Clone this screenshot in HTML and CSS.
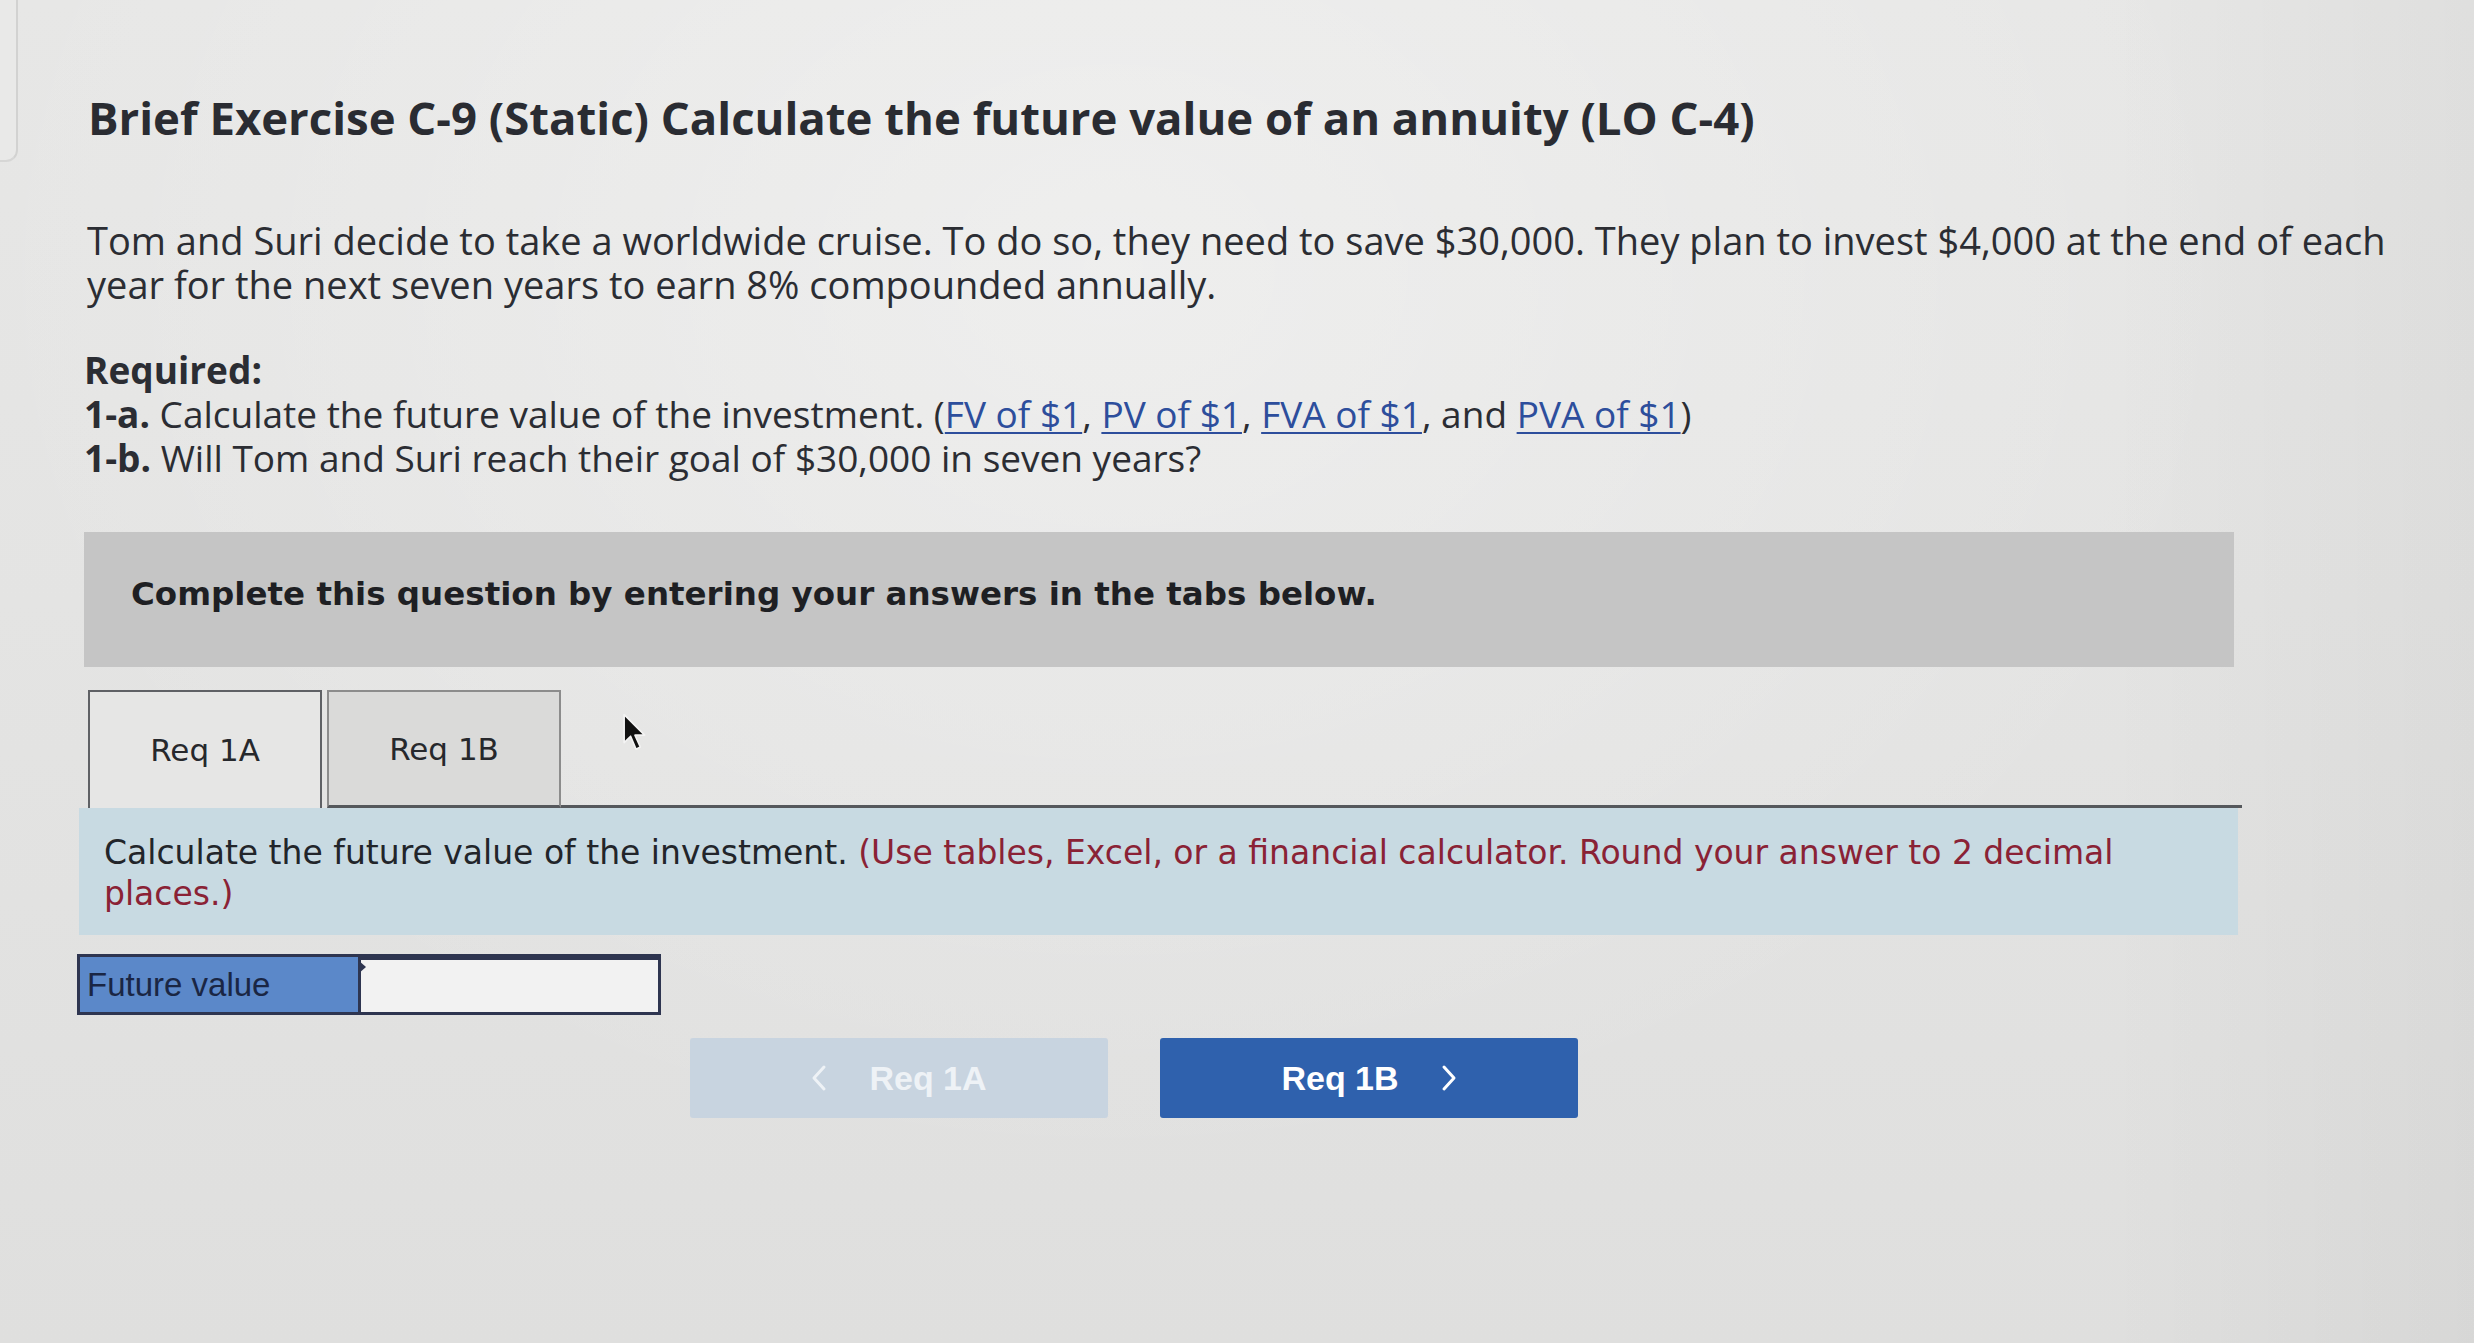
FILE: index.html
```html
<!DOCTYPE html>
<html lang="en">
<head>
<meta charset="utf-8">
<title>Brief Exercise C-9 (Static)</title>
<link rel="stylesheet" href="styles.css">
</head>
<body>
<div class="screen">
  <div class="edge"></div>
  <div class="page">
    <h1 class="title">Brief Exercise C-9 (Static) Calculate the future value of an annuity (LO C-4)</h1>
    <p class="intro">Tom and Suri decide to take a worldwide cruise. To do so, they need to save $30,000. They plan to invest $4,000 at the end of each year for the next seven years to earn 8% compounded annually.</p>
    <div class="required">
      <div class="req-head">Required:</div>
      <div class="req-line"><b>1-a.</b> Calculate the future value of the investment. (<a href="#">FV of $1</a>, <a href="#">PV of $1</a>, <a href="#">FVA of $1</a>, and <a href="#">PVA of $1</a>)</div>
      <div class="req-line"><b>1-b.</b> Will Tom and Suri reach their goal of $30,000 in seven years?</div>
    </div>
    <div class="notice">Complete this question by entering your answers in the tabs below.</div>
    <div class="tabs">
      <div class="tab tab-active">Req 1A</div>
      <div class="tab">Req 1B</div>
      <div class="tab-rest"></div>
    </div>
    <div class="panel"><span class="lead">Calculate the future value of the investment.</span> <span class="hint">(Use tables, Excel, or a financial calculator. Round your answer to 2 decimal places.)</span></div>
    <div class="answer">
      <div class="answer-label">Future value</div>
      <div class="answer-input"><span class="marker"></span></div>
    </div>
    <div class="nav">
      <button class="btn btn-prev">
        <svg class="chev" width="16" height="28" viewBox="0 0 16 28" aria-hidden="true"><polyline points="13,3 3,14 13,25" fill="none" stroke="currentColor" stroke-width="3" stroke-linecap="round" stroke-linejoin="round"/></svg>
        <span>Req 1A</span>
      </button>
      <button class="btn btn-next">
        <span>Req 1B</span>
        <svg class="chev" width="16" height="28" viewBox="0 0 16 28" aria-hidden="true"><polyline points="3,3 13,14 3,25" fill="none" stroke="currentColor" stroke-width="3" stroke-linecap="round" stroke-linejoin="round"/></svg>
      </button>
    </div>
  </div>
  <svg class="cursor" width="28" height="42" viewBox="0 0 26 38" aria-hidden="true">
    <path d="M2 2 L2 28 L8 22 L13 34 L17 32 L12 21 L21 21 Z" fill="#111" stroke="#f4f4f4" stroke-width="1.5" stroke-linejoin="round"/>
  </svg>
</div>
</body>
</html>
```
FILE: styles.css
```css
html, body {
  margin: 0;
  padding: 0;
}
body {
  width: 2474px;
  height: 1343px;
  overflow: hidden;
  background: linear-gradient(180deg, #e7e7e6 0%, #e4e4e3 45%, #dfdfde 100%);
  font-family: "Open Sans", "Liberation Sans", sans-serif;
  color: #2b2d33;
}
.screen {
  position: relative;
  width: 100%;
  height: 100%;
  background:
    linear-gradient(90deg, rgba(0,0,0,0) 85%, rgba(0,0,0,0.035) 100%),
    radial-gradient(ellipse at 45% 20%, rgba(255,255,255,0.35), rgba(255,255,255,0) 60%);
}
.edge {
  position: absolute;
  left: 0;
  top: 0;
  width: 16px;
  height: 160px;
  border-right: 2px solid #d2d2d1;
  border-bottom: 2px solid #d6d6d5;
  border-bottom-right-radius: 12px;
  background: #e9e9e8;
}
.page {
  padding: 91px 0 0 84px;
}
.title {
  margin: 0 0 0 4px;
  font-size: 45.5px;
  line-height: 52px;
  font-weight: 700;
  color: #2a2c32;
  white-space: nowrap;
}
.intro {
  margin: 75px 0 0 3px;
  font-size: 38px;
  line-height: 44px;
  width: 2345px;
}
.required {
  margin-top: 42px;
  font-size: 37px;
  line-height: 44px;
}
.req-head,
.req-line b {
  font-weight: 700;
}
.required a {
  color: #2d4e9c;
  text-decoration: underline;
  text-decoration-thickness: 2px;
  text-underline-offset: 4px;
}
.notice {
  margin-top: 52px;
  width: 2150px;
  height: 135px;
  box-sizing: border-box;
  padding: 43px 0 0 47px;
  background: #c5c5c5;
  font-family: "DejaVu Sans", Verdana, sans-serif;
  font-weight: 700;
  font-size: 32.5px;
  color: #1e1f23;
}
.tabs {
  display: flex;
  align-items: flex-end;
  margin-top: 23px;
  margin-left: 4px;
  width: 2154px;
}
.tab {
  box-sizing: border-box;
  width: 234px;
  height: 118px;
  display: flex;
  align-items: center;
  justify-content: center;
  font-family: "DejaVu Sans", Verdana, sans-serif;
  font-size: 31px;
  color: #26282c;
  border: 2px solid #8c8c8c;
  border-bottom: 3px solid #55585c;
  background: #dadad9;
  margin-right: 5px;
}
.tab-active {
  background: #e6e6e5;
  border-color: #5f6165;
  border-bottom: none;
}
.tab-rest {
  flex: 1;
  border-bottom: 3px solid #55585c;
  margin-left: -5px;
}
.panel {
  margin-left: -5px;
  width: 2159px;
  height: 127px;
  box-sizing: border-box;
  padding: 24px 40px 0 25px;
  background: #c8dae2;
  font-family: "DejaVu Sans", Verdana, sans-serif;
  font-size: 33px;
  line-height: 41px;
  color: #22252a;
}
.hint {
  color: #8a2235;
}
.answer {
  display: flex;
  margin-top: 19px;
  margin-left: -7px;
  width: 584px;
  height: 61px;
  box-sizing: border-box;
  border: 3px solid #2e3550;
}
.answer-label {
  width: 278px;
  background: #5b88c9;
  font-family: "Liberation Sans", Arial, sans-serif;
  font-size: 33px;
  line-height: 55px;
  padding-left: 7px;
  box-sizing: border-box;
  color: #1a2644;
}
.answer-input {
  position: relative;
  flex: 1;
  background: #f2f2f2;
  border-left: 3px solid #2e3550;
  border-top: 3px solid #2e3550;
}
.marker {
  position: absolute;
  left: -3px;
  top: 0;
  width: 0;
  height: 0;
  border-top: 7px solid transparent;
  border-bottom: 7px solid transparent;
  border-left: 8px solid #2e3550;
}
.nav {
  display: flex;
  gap: 52px;
  margin-top: 23px;
  padding-left: 606px;
}
.btn {
  width: 418px;
  height: 80px;
  border: none;
  border-radius: 3px;
  font-family: "Liberation Sans", Arial, sans-serif;
  font-weight: 700;
  font-size: 34px;
  display: flex;
  align-items: center;
  justify-content: center;
  gap: 42px;
  padding: 0;
}
.btn-prev {
  background: #c8d4e0;
  color: #eef2f6;
}
.btn-next {
  background: #2f61ad;
  color: #ffffff;
}
.chev {
  display: block;
}
.cursor {
  position: absolute;
  left: 622px;
  top: 712px;
}
```
